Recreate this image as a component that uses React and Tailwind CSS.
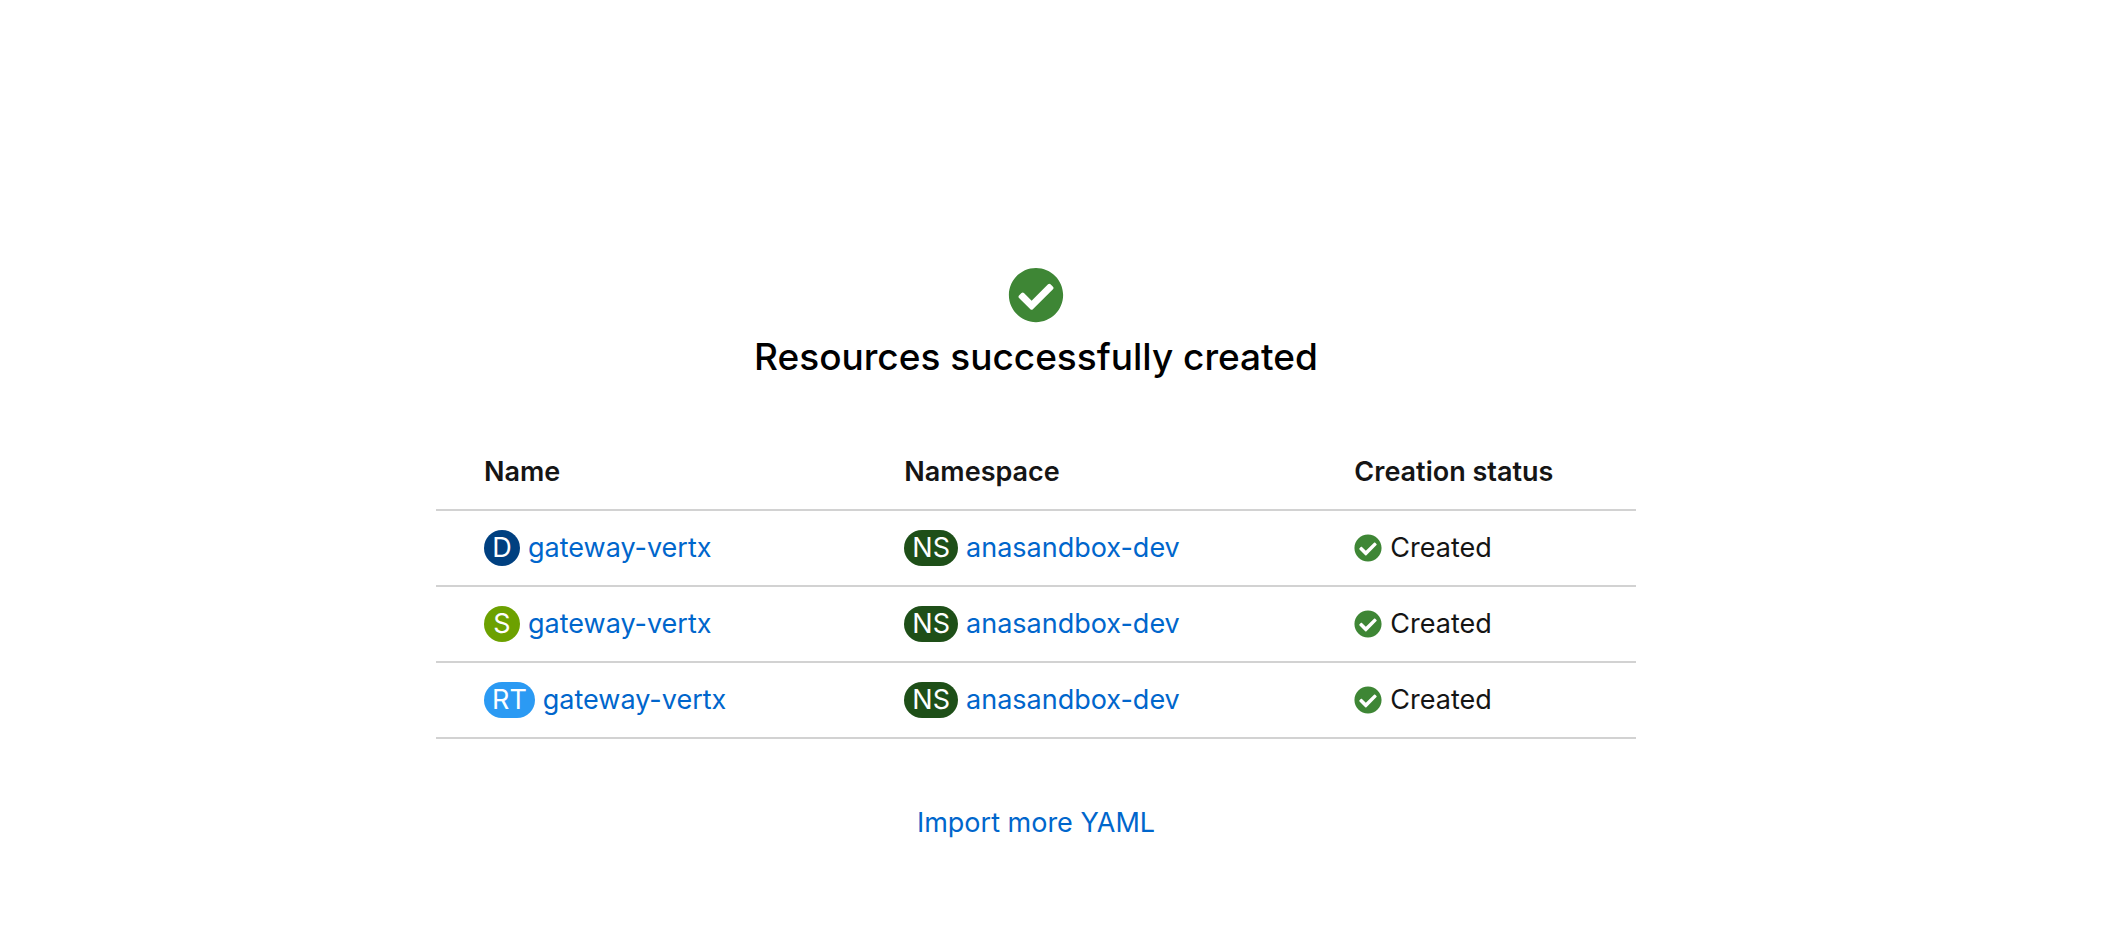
import { FaCheckCircle } from "react-icons/fa";

const resources = [
  { badge: "D", color: "bg-[#004080]", name: "gateway-vertx", namespace: "anasandbox-dev" },
  { badge: "S", color: "bg-[#6ca100]", name: "gateway-vertx", namespace: "anasandbox-dev" },
  { badge: "RT", color: "bg-[#2b9af3]", name: "gateway-vertx", namespace: "anasandbox-dev" },
];

function ResourceLink({ badge, color, children }) {
  return (
    <div className="flex items-center gap-2">
      <span
        className={`inline-flex h-9 min-w-9 items-center justify-center rounded-full px-2 text-[27px] leading-9 text-white ${color}`}
      >
        {badge}
      </span>
      <a href="#" className="text-[#0066cc] hover:underline">
        {children}
      </a>
    </div>
  );
}

export default function App() {
  return (
    <main className="flex min-h-screen flex-col items-center bg-white pt-[267px] pr-[42px] font-['Inter',sans-serif] text-[27px] leading-9 text-[#151515]">
      <FaCheckCircle className="size-14 text-[#3e8635]" aria-hidden="true" />
      <h1 className="mt-2 text-[37px] leading-[52px] font-medium text-black">
        Resources successfully created
      </h1>

      <table className="mt-[51px] w-full max-w-[1200px] table-fixed border-collapse text-left">
        <colgroup>
          <col className="w-4/11" />
          <col className="w-3/8" />
          <col />
        </colgroup>
        <thead>
          <tr className="h-[76px] border-b-2 border-[#d2d2d2]">
            <th scope="col" className="pl-12 font-semibold">Name</th>
            <th scope="col" className="pl-8 font-semibold">Namespace</th>
            <th scope="col" className="pl-8 font-semibold">Creation status</th>
          </tr>
        </thead>
        <tbody>
          {resources.map((r) => (
            <tr key={r.badge} className="h-[76px] border-b-2 border-[#d2d2d2]">
              <td className="pl-12">
                <ResourceLink badge={r.badge} color={r.color}>{r.name}</ResourceLink>
              </td>
              <td className="pl-8">
                <ResourceLink badge="NS" color="bg-[#1e4f18]">{r.namespace}</ResourceLink>
              </td>
              <td className="pl-8">
                <div className="flex items-center gap-2">
                  <FaCheckCircle className="size-7 text-[#3e8635]" aria-hidden="true" />
                  Created
                </div>
              </td>
            </tr>
          ))}
        </tbody>
      </table>

      <a href="#" className="mt-[66px] text-[#0066cc] hover:underline">
        Import more YAML
      </a>
    </main>
  );
}
